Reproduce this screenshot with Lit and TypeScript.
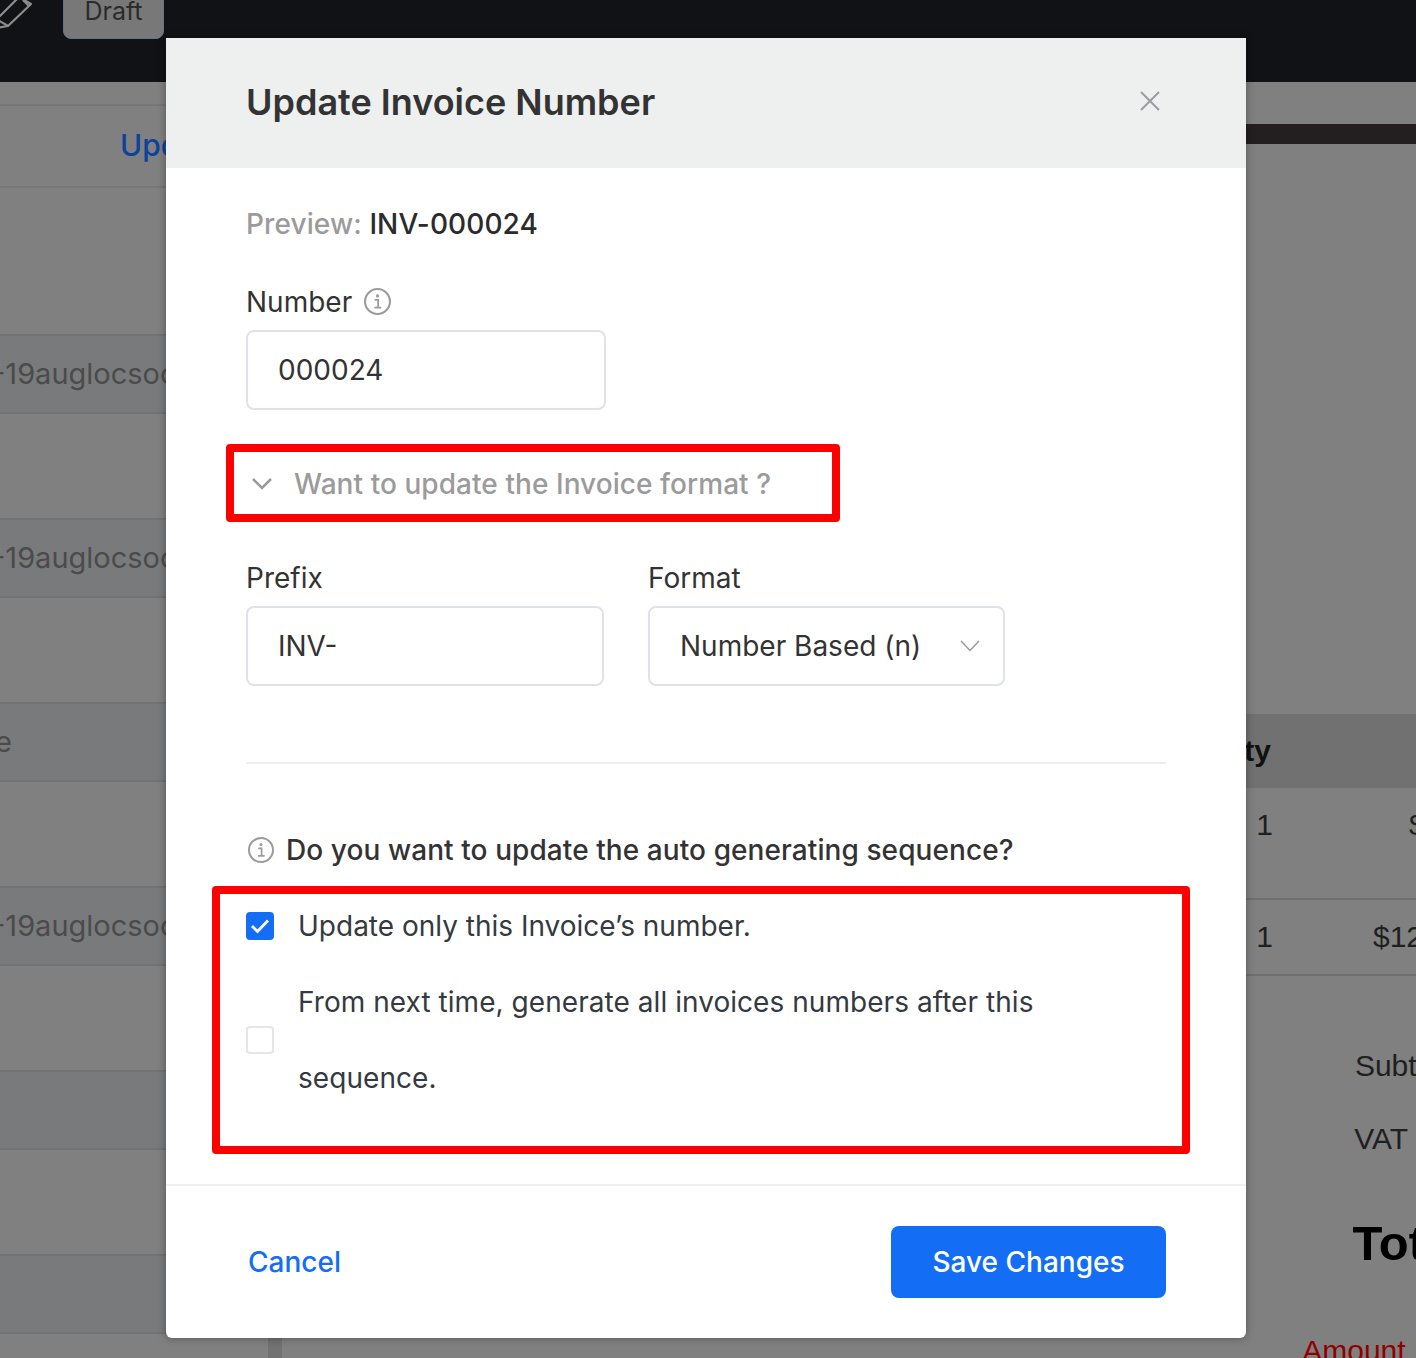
import { LitElement, html, css, svg } from "lit";
import { customElement } from "lit/decorators.js";

const infoIcon = svg`<circle cx="13" cy="13" r="12" fill="none" stroke="#9b9b9b" stroke-width="2"/><circle cx="13" cy="7.6" r="1.5" fill="#9b9b9b"/><path d="M10.2 11.4h3.4v7.2M10 18.8h6.6" fill="none" stroke="#9b9b9b" stroke-width="1.7"/>`;

@customElement("app-root")
export class AppRoot extends LitElement {
  static styles = css`
    :host {
      display: block;
      position: relative;
      height: 1358px;
      overflow: hidden;
      background: #808080;
      font-family: Inter, "Liberation Sans", sans-serif;
      color: #333;
    }
    .topbar {
      height: 82px;
      background: #111216;
      display: flex;
      align-items: flex-start;
      gap: 31px;
      overflow: hidden;
    }
    .pencil { width: 32px; height: 30px; flex: none; }
    .badge {
      margin-top: -40px;
      width: 101px;
      height: 79px;
      box-sizing: border-box;
      border: 1px solid #66738a;
      border-radius: 8px;
      background: #787878;
      color: #2b2b2b;
      font-size: 25px;
      line-height: 100px;
      text-align: center;
    }
    .page { display: flex; height: 1276px; }
    .left { width: 268px; flex: none; overflow: hidden; white-space: nowrap; }
    .rule { width: 14px; flex: none; background: #727272; }
    .right { flex: none; width: 1183px; font-family: "Liberation Sans", Arial, sans-serif; color: #1f1f1f; font-size: 30px; white-space: nowrap; }
    .l-head { height: 22px; border-bottom: 2px solid #767676; }
    .l-link {
      height: 80px;
      border-bottom: 2px solid #767676;
      padding-left: 120px;
      line-height: 78px;
      font-size: 30px;
      font-weight: 500;
      color: #0d439c;
    }
    .l-gap { height: 146px; }
    .l-gap2 { height: 104px; }
    .stripe {
      height: 76px;
      background: #797a7c;
      border-top: 2px solid #717274;
      border-bottom: 2px solid #717274;
      line-height: 76px;
      font-size: 29px;
      color: #4b4b4b;
      text-indent: -8px;
    }
    .stripe.tail { text-indent: -5px; }
    .bar { height: 20px; background: #231f20; margin-top: 42px; }
    .t-head {
      margin-top: 570px;
      height: 74px;
      background: #717171;
      display: flex;
      align-items: center;
      font-weight: 700;
      color: #111;
    }
    .t-head .qty { width: 989px; text-align: right; flex: none; }
    .t-row .qty { width: 991px; text-align: right; flex: none; }
    .t-row { display: flex; border-bottom: 2px solid #6f6f6f; }
    .t-row.a { height: 110px; line-height: 74px; }
    .t-row.b { height: 74px; line-height: 74px; }
    .rate { flex: none; }
    .rate.a { padding-left: 136px; }
    .rate.b { padding-left: 100px; }
    .summary { margin-top: 53px; text-align: right; }
    .summary div { line-height: 74px; }
    .summary .vat { margin-right: -11px; line-height: 72px; }
    .summary .total { font-size: 49px; font-weight: 700; color: #000; line-height: 136px; margin-right: -1px; }
    .summary .due { color: #8f0000; line-height: 80px; margin-right: -4px; }

    .modal {
      position: absolute;
      left: 166px;
      top: 38px;
      width: 1080px;
      height: 1300px;
      background: #fff;
      border-radius: 0 0 6px 6px;
      box-shadow: 0 0 8px rgba(0, 0, 0, 0.35);
      display: flex;
      flex-direction: column;
    }
    .m-head {
      height: 130px;
      flex: none;
      background: #eef0ef;
      display: flex;
      align-items: center;
      justify-content: space-between;
      padding: 0 84px 2px 80px;
      box-sizing: border-box;
    }
    h2 { margin: 0; font-size: 36px; font-weight: 600; color: #333; line-height: 128px; }
    .close { width: 24px; height: 24px; margin-top: -2px; }
    .m-body { flex: 1; padding: 18px 80px 0; box-sizing: border-box; font-size: 28px; }
    .preview { line-height: 76px; font-weight: 500; color: #2b2b2b; letter-spacing: 0.1px; }
    .preview span { color: #9b9b9b; }
    .label { height: 56px; line-height: 56px; display: flex; align-items: center; gap: 12px; color: #333; }
    .number { margin-top: 12px; }
    .number .info { margin-top: -2px; }
    .info { width: 27px; height: 27px; flex: none; }
    .input {
      height: 80px;
      box-sizing: border-box;
      border: 2px solid #e0e2ea;
      border-radius: 8px;
      padding: 0 30px;
      line-height: 76px;
      color: #333;
      display: flex;
      justify-content: space-between;
      align-items: center;
    }
    .w360 { width: 360px; }
    .collapse {
      margin-top: 36px;
      height: 76px;
      display: flex;
      align-items: center;
      gap: 22px;
      padding-left: 6px;
      color: #9b9b9b;
      font-weight: 500;
      letter-spacing: 0.06px;
    }
    .chev { width: 20px; height: 12px; flex: none; }
    .pair { margin-top: 28px; display: grid; grid-template-columns: 358px 357px; column-gap: 44px; }
    .arrow { width: 20px; height: 12px; margin-right: -7px; }
    hr { margin: 76px 0 0; border: 0; height: 2px; background: #eceef2; }
    .question {
      margin-top: 48px;
      height: 76px;
      display: flex;
      align-items: center;
      gap: 12px;
      padding-left: 2px;
      font-weight: 500;
      color: #333;
      letter-spacing: 0.08px;
    }
    .question .info { width: 26px; height: 26px; }
    .option { display: flex; align-items: center; gap: 24px; line-height: 76px; color: #343a40; }
    .option.wide { letter-spacing: 0.05px; }
    .box {
      width: 28px;
      height: 28px;
      flex: none;
      box-sizing: border-box;
      border: 2px solid #e4e5e7;
      border-radius: 4px;
      background: #fff;
      display: flex;
      align-items: center;
      justify-content: center;
    }
    .box.on { background: #146ef5; border-color: #146ef5; }
    .box svg { width: 20px; height: 16px; }
    .m-foot {
      height: 154px;
      flex: none;
      box-sizing: border-box;
      border-top: 2px solid #eef0f2;
      padding: 0 80px 0 83px;
      display: flex;
      align-items: center;
      justify-content: space-between;
      font-size: 28px;
      font-weight: 500;
    }
    .cancel { color: #146ef5; margin-left: -1px; }
    .save {
      width: 275px;
      height: 72px;
      border-radius: 8px;
      background: #146ef5;
      color: #fff;
      display: flex;
      align-items: center;
      justify-content: center;
    }
    .mark {
      position: absolute;
      box-sizing: border-box;
      border: 8px solid #ff0000;
      border-radius: 4px;
      pointer-events: none;
    }
    .mark.one { left: 60px; top: 406px; width: 614px; height: 78px; }
    .mark.two { left: 46px; top: 848px; width: 978px; height: 268px; }
  `;

  render() {
    return html`
      <div class="topbar">
        <svg class="pencil" viewBox="0 0 32 30" fill="none" stroke="#8c8c8c" stroke-width="2.2" stroke-linejoin="round">
          <path d="M-3 19 L19 -3 L31 4 L8 26 L-3 28"/>
          <path d="M-2 20 L8 26"/>
          <path d="M23 0 L29 6"/>
        </svg>
        <div class="badge">Draft</div>
      </div>
      <div class="page">
        <div class="left">
          <div class="l-head"></div>
          <div class="l-link">Update</div>
          <div class="l-gap"></div>
          <div class="stripe">-19auglocsoc</div><div class="l-gap2"></div>
          <div class="stripe">-19auglocsoc</div><div class="l-gap2"></div>
          <div class="stripe tail">e</div><div class="l-gap2"></div>
          <div class="stripe">-19auglocsoc</div><div class="l-gap2"></div>
          <div class="stripe"></div><div class="l-gap2"></div>
          <div class="stripe"></div>
        </div>
        <div class="rule"></div>
        <div class="right">
          <div class="bar"></div>
          <div class="t-head"><div class="qty">Qty</div></div>
          <div class="t-row a"><div class="qty">1</div><div class="rate a">$120.00</div></div>
          <div class="t-row b"><div class="qty">1</div><div class="rate b">$120.00</div></div>
          <div class="summary">
            <div>Subtotal</div>
            <div class="vat">VAT 10%</div>
            <div class="total">Total</div>
            <div class="due">Amount Due</div>
          </div>
        </div>
      </div>

      <div class="modal">
        <div class="m-head">
          <h2>Update Invoice Number</h2>
          <svg class="close" viewBox="0 0 24 24" fill="none" stroke="#9a9ca3" stroke-width="2">
            <path d="M3 3 L21 21 M21 3 L3 21"/>
          </svg>
        </div>
        <div class="m-body">
          <div class="preview"><span>Preview:</span> INV-000024</div>
          <div class="label number">Number <svg class="info" viewBox="0 0 26 26">${infoIcon}</svg></div>
          <div class="input w360">000024</div>
          <div class="collapse">
            <svg class="chev" viewBox="0 0 20 12" fill="none" stroke="#9b9b9b" stroke-width="2.6"><path d="M1 1 L10 10 L19 1"/></svg>
            Want to update the Invoice format ?
          </div>
          <div class="pair">
            <div>
              <div class="label">Prefix</div>
              <div class="input">INV-</div>
            </div>
            <div>
              <div class="label">Format</div>
              <div class="input">
                Number Based (n)
                <svg class="arrow" viewBox="0 0 20 12" fill="none" stroke="#9b9b9b" stroke-width="1.5"><path d="M1 1 L10 10.5 L19 1"/></svg>
              </div>
            </div>
          </div>
          <hr />
          <div class="question">
            <svg class="info" viewBox="0 0 26 26">${infoIcon}</svg>
            Do you want to update the auto generating sequence?
          </div>
          <div class="option">
            <div class="box on">
              <svg viewBox="0 0 20 16" fill="none" stroke="#fff" stroke-width="2.8"><path d="M2 8 L7.5 13.5 L18 2.5"/></svg>
            </div>
            <div>Update only this Invoice’s number.</div>
          </div>
          <div class="option wide">
            <div class="box"></div>
            <div>From next time, generate all invoices numbers after this sequence.</div>
          </div>
        </div>
        <div class="m-foot">
          <div class="cancel">Cancel</div>
          <div class="save">Save Changes</div>
        </div>
        <div class="mark one"></div>
        <div class="mark two"></div>
      </div>
    `;
  }
}
